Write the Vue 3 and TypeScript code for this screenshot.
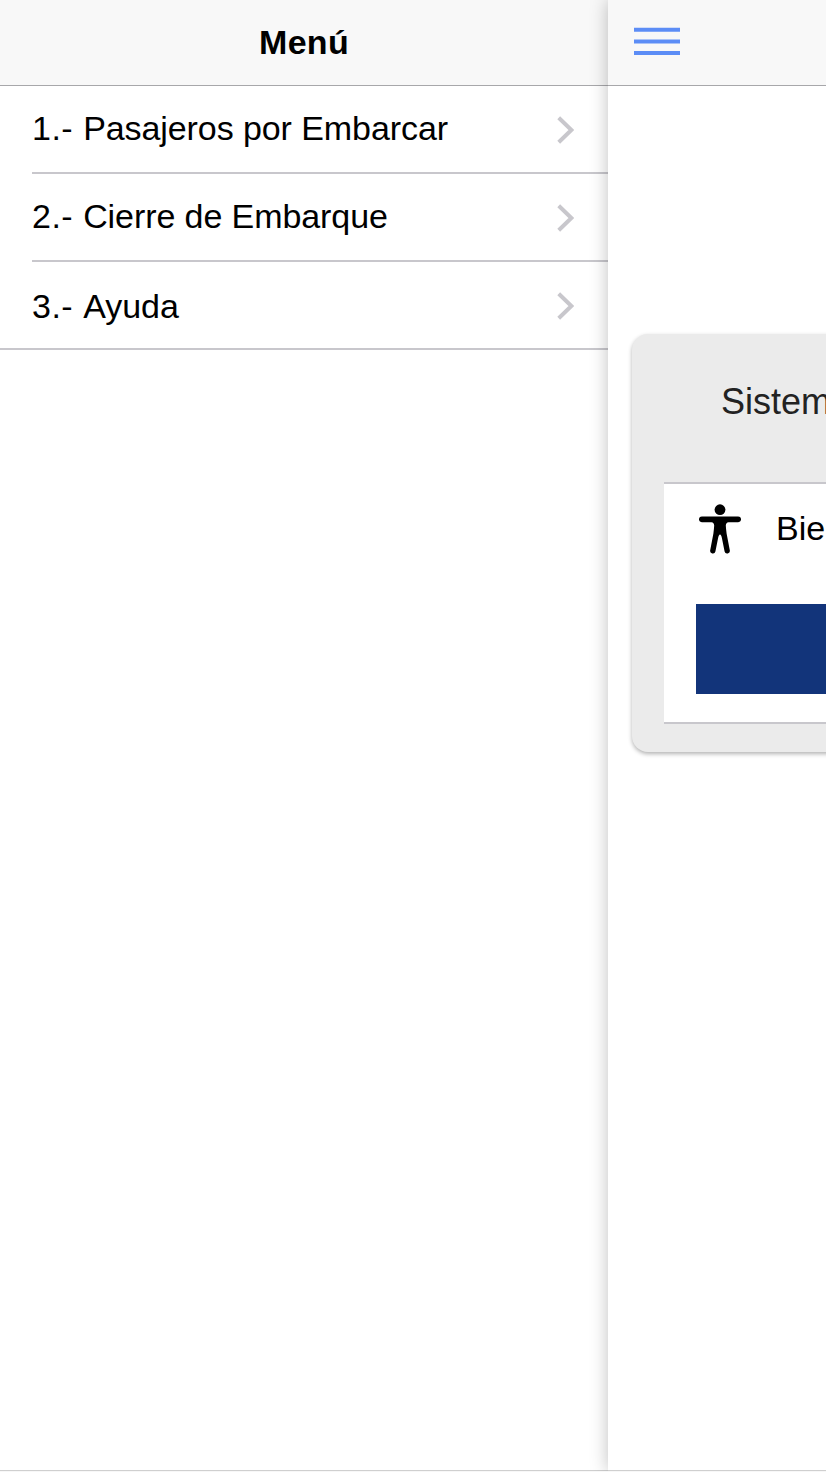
<script setup lang="ts">
interface MenuItem {
  id: number
  label: string
}

const items: MenuItem[] = [
  { id: 1, label: 'Pasajeros por Embarcar' },
  { id: 2, label: 'Cierre de Embarque' },
  { id: 3, label: 'Ayuda' },
]
</script>

<template>
  <div class="app">
    <aside class="menu">
      <header class="bar"><h1 class="title">Menú</h1></header>
      <nav class="list">
        <a v-for="item in items" :key="item.id" class="item">
          <span class="item-inner">
            <span class="label"><span class="number">{{ item.id }}.- </span>{{ item.label }}</span>
            <svg class="chevron" viewBox="0 0 17 28">
              <path d="M1.7 1.7L14.4 14L1.7 26.3" fill="none" stroke="#c8c7cc" stroke-width="4" />
            </svg>
          </span>
        </a>
      </nav>
    </aside>

    <main class="page">
      <header class="bar page-bar">
        <svg class="burger" viewBox="0 0 46 28">
          <path d="M0 .7h46v4H0zM0 12.5h46v4H0zM0 23.9h46v4H0z" fill="#5c8df6" />
        </svg>
      </header>
      <section class="card">
        <h2 class="card-title">Sistem</h2>
        <div class="panel">
          <div class="welcome">
            <svg class="person" viewBox="0 0 42 50">
              <circle cx="21" cy="5.7" r="5.4" />
              <path d="M2.8 12.5H39.2a2.8 2.8 0 0 1 0 5.7H29.5Q27 18.4 26.8 21.5Q27 25 27.6 29.5L30.8 46.2A2.6 2.6 0 0 1 25.6 47.4L22.9 34Q22.2 30.5 21 30.5T19.1 34L16.4 47.4A2.6 2.6 0 0 1 11.2 46.2L14.4 29.5Q15 25 15.2 21.5Q15 18.4 12.5 18.2H2.8a2.8 2.8 0 0 1 0-5.7z" />
            </svg>
            <span class="welcome-text">Bie</span>
          </div>
          <div class="action"></div>
        </div>
      </section>
    </main>
  </div>
</template>

<style>
body {
  margin: 0;
  overflow: hidden;
}
</style>

<style scoped>
.app {
  box-sizing: border-box;
  display: flex;
  width: 826px;
  height: 1472px;
  overflow: hidden;
  background: #fff;
  border-bottom: 1px solid #f7f7f7;
  font-family: "Liberation Sans", Arial, sans-serif;
  color: #000;
}
.menu {
  flex: 0 0 608px;
  box-shadow: inset 0 -1px #cfcfcf;
}
.page {
  position: relative;
  flex: 0 0 828px;
  background: #fff;
  box-shadow: 0 0 17px rgba(0, 0, 0, 0.25), inset 0 -1px #cfcfcf;
}
.bar {
  box-sizing: border-box;
  display: flex;
  align-items: center;
  justify-content: center;
  height: 86px;
  background: #f8f8f8;
  border-bottom: 1px solid #a7a7aa;
}
.title {
  margin: 0;
  padding-bottom: 2px;
  font-size: 34px;
  line-height: 40px;
  font-weight: 700;
  letter-spacing: 0.3px;
}
.page-bar {
  justify-content: flex-start;
  padding-left: 26px;
}
.burger {
  width: 46px;
  height: 28px;
  margin-top: -4px;
}
.list {
  border-bottom: 2px solid #c8c7cc;
}
.item {
  display: block;
  padding-left: 32px;
}
.item-inner {
  box-sizing: border-box;
  display: flex;
  align-items: center;
  justify-content: space-between;
  height: 88px;
  padding-right: 34px;
  border-bottom: 2px solid #c8c7cc;
}
.item:last-child .item-inner {
  height: 86px;
  border-bottom: 0;
}
.label {
  padding-bottom: 2px;
  font-size: 34px;
  line-height: 40px;
  letter-spacing: -0.08px;
  white-space: nowrap;
}
.item:last-child .label {
  padding: 2px 0 0;
  letter-spacing: 0;
}
.number {
  letter-spacing: 0.5px;
}
.chevron {
  width: 17px;
  height: 28px;
  margin-top: 2px;
}
.card {
  box-sizing: border-box;
  width: 780px;
  height: 418px;
  margin: 248px 24px 0;
  padding: 0 32px;
  background: #ebebeb;
  border-radius: 16px;
  box-shadow: 0 2px 4px rgba(0, 0, 0, 0.3);
}
.card-title {
  margin: 0;
  height: 148px;
  padding: 46px 0 0 57px;
  box-sizing: border-box;
  font-size: 36px;
  line-height: 44px;
  font-weight: 400;
  color: #222;
}
.panel {
  box-sizing: border-box;
  height: 242px;
  padding: 0 32px;
  background: #fff;
  border-top: 2px solid #c8c7cc;
  border-bottom: 2px solid #c8c7cc;
}
.welcome {
  display: flex;
  align-items: center;
  height: 90px;
  padding-left: 3px;
}
.person {
  width: 42px;
  height: 50px;
}
.welcome-text {
  margin-left: 35px;
  padding-bottom: 2px;
  font-size: 34px;
  line-height: 40px;
}
.action {
  height: 90px;
  margin-top: 30px;
  background: #12347a;
}
</style>
